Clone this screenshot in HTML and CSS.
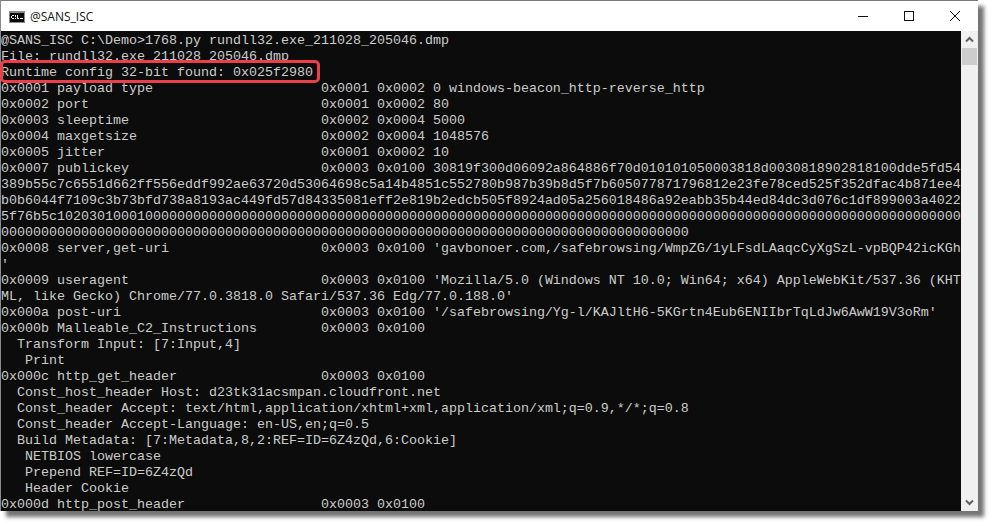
FILE: index.html
```html
<!DOCTYPE html>
<html lang="en">
<head>
<meta charset="utf-8">
<title>@SANS_ISC</title>
<link rel="stylesheet" href="styles.css">
</head>
<body>
<div class="window">
  <header class="titlebar">
    <svg class="app-icon" width="16" height="12" viewBox="0 0 16 12" aria-hidden="true">
      <rect x="0" y="0" width="16" height="12" fill="#8a8a8a"/>
      <rect x="1" y="2" width="14" height="9" fill="#0a0a0a"/>
      <path d="M3 4h2v1H3v2h2v1H3V7H2V5h1zM6 4h1v2H6zM6 7h1v1H6zM8 4h1v3h1v1H8zM11 7h3v1h-3z" fill="#f2f2f2"/>
    </svg>
    <span class="title">@SANS_ISC</span>
    <div class="controls">
      <svg class="ctl" width="46" height="30" viewBox="0 0 46 30" aria-hidden="true"><path d="M18 15.5h10" stroke="#111" fill="none"/></svg>
      <svg class="ctl" width="46" height="30" viewBox="0 0 46 30" aria-hidden="true"><rect x="18.5" y="10.5" width="9" height="9" stroke="#111" fill="none"/></svg>
      <svg class="ctl" width="46" height="30" viewBox="0 0 46 30" aria-hidden="true"><path d="M18 10l10 10M28 10L18 20" stroke="#111" fill="none"/></svg>
    </div>
  </header>
  <div class="content">
    <pre class="console">@SANS_ISC C:\Demo&gt;1768.py rundll32.exe_211028_205046.dmp
File: rundll32.exe_211028_205046.dmp
Runtime config 32-bit found: 0x025f2980
0x0001 payload type                     0x0001 0x0002 0 windows-beacon_http-reverse_http
0x0002 port                             0x0001 0x0002 80
0x0003 sleeptime                        0x0002 0x0004 5000
0x0004 maxgetsize                       0x0002 0x0004 1048576
0x0005 jitter                           0x0001 0x0002 10
0x0007 publickey                        0x0003 0x0100 30819f300d06092a864886f70d010101050003818d0030818902818100dde5fd54
389b55c7c6551d662ff556eddf992ae63720d53064698c5a14b4851c552780b987b39b8d5f7b605077871796812e23fe78ced525f352dfac4b871ee4
b0b6044f7109c3b73bfd738a8193ac449fd57d84335081eff2e819b2edcb505f8924ad05a256018486a92eabb35b44ed84dc3d076c1df899003a4022
5f76b5c10203010001000000000000000000000000000000000000000000000000000000000000000000000000000000000000000000000000000000
00000000000000000000000000000000000000000000000000000000000000000000000000000000000000
0x0008 server,get-uri                   0x0003 0x0100 'gavbonoer.com,/safebrowsing/WmpZG/1yLFsdLAaqcCyXgSzL-vpBQP42icKGh
'
0x0009 useragent                        0x0003 0x0100 'Mozilla/5.0 (Windows NT 10.0; Win64; x64) AppleWebKit/537.36 (KHT
ML, like Gecko) Chrome/77.0.3818.0 Safari/537.36 Edg/77.0.188.0'
0x000a post-uri                         0x0003 0x0100 '/safebrowsing/Yg-l/KAJltH6-5KGrtn4Eub6ENIIbrTqLdJw6AwW19V3oRm'
0x000b Malleable_C2_Instructions        0x0003 0x0100
  Transform Input: [7:Input,4]
   Print
0x000c http_get_header                  0x0003 0x0100
  Const_host_header Host: d23tk31acsmpan.cloudfront.net
  Const_header Accept: text/html,application/xhtml+xml,application/xml;q=0.9,*/*;q=0.8
  Const_header Accept-Language: en-US,en;q=0.5
  Build Metadata: [7:Metadata,8,2:REF=ID=6Z4zQd,6:Cookie]
   NETBIOS lowercase
   Prepend REF=ID=6Z4zQd
   Header Cookie
0x000d http_post_header                 0x0003 0x0100</pre>
    <div class="highlight"></div>
    <div class="scrollbar">
      <svg width="17" height="17" viewBox="0 0 17 17" aria-hidden="true"><path d="M5 10.5l3.5-3.5 3.5 3.5" stroke="#606060" stroke-width="2" fill="none"/></svg>
      <div class="thumb"></div>
      <div class="track"></div>
      <svg width="17" height="17" viewBox="0 0 17 17" aria-hidden="true"><path d="M5 6.5l3.5 3.5 3.5-3.5" stroke="#606060" stroke-width="2" fill="none"/></svg>
    </div>
  </div>
</div>
</body>
</html>
```
FILE: styles.css
```css
html, body {
  margin: 0;
  height: 100%;
  background: #fff;
  overflow: hidden;
}
.window {
  width: 977px;
  height: 510px;
  border-top: 1px solid #7a7a7a;
  border-left: 1px solid #8a8a8a;
  display: flex;
  flex-direction: column;
  background: #fff;
  box-shadow: 6px 6px 4px rgba(0, 0, 0, 0.55);
}
.titlebar {
  height: 30px;
  flex: none;
  display: flex;
  align-items: center;
  background: #fff;
  padding-left: 8px;
}
.app-icon {
  flex: none;
  margin-top: 1px;
}
.title {
  margin-left: 5px;
  font: 12px "Open Sans", "Noto Sans", sans-serif;
  color: #111;
}
.controls {
  margin-left: auto;
  display: flex;
}
.ctl {
  display: block;
}
.content {
  position: relative;
  flex: 1;
  display: flex;
  min-height: 0;
}
.console {
  flex: 1;
  margin: 0;
  padding-top: 2px;
  overflow: hidden;
  background: #0c0c0c;
  color: #cccccc;
  font: 13.333px/16px "Liberation Mono", monospace;
  white-space: pre;
}
.highlight {
  position: absolute;
  left: -1px;
  top: 29px;
  width: 320px;
  height: 23px;
  box-sizing: border-box;
  border: 3px solid #ec3f4b;
  border-radius: 5px;
}
.scrollbar {
  flex: none;
  width: 17px;
  background: #f0f0f0;
  display: flex;
  flex-direction: column;
}
.scrollbar svg {
  display: block;
  flex: none;
}
.thumb {
  height: 17px;
  margin: 0 1px;
  background: #cdcdcd;
}
.track {
  flex: 1;
}
```
